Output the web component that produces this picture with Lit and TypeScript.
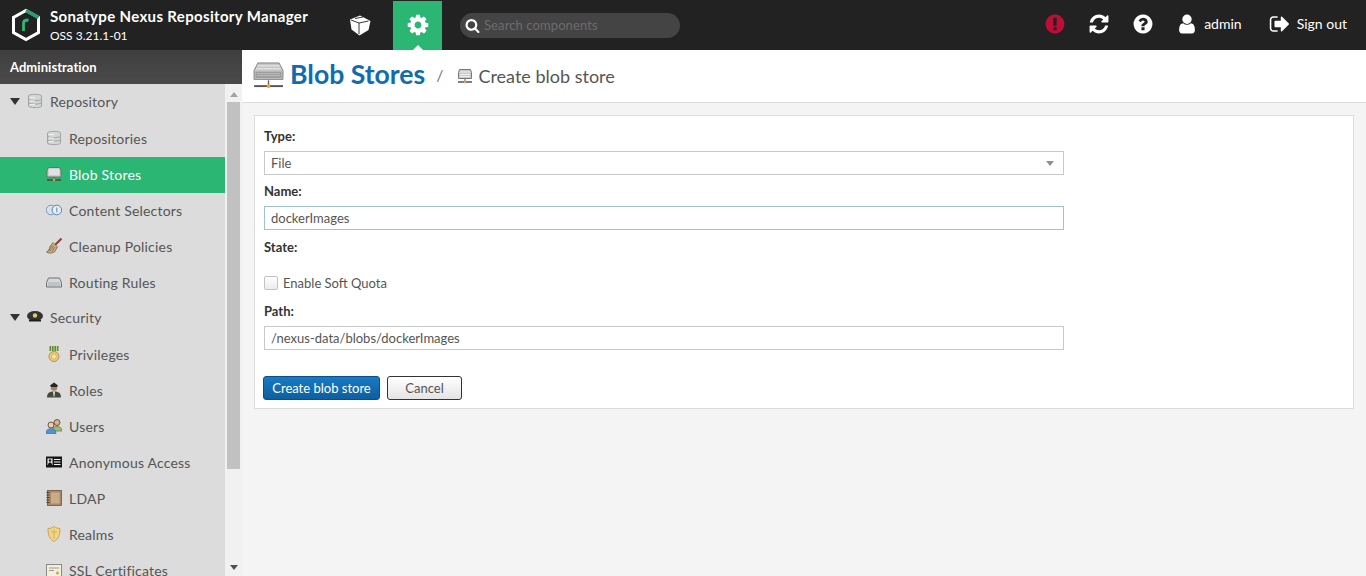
import { LitElement, html, css, svg } from "lit";
import { customElement } from "lit/decorators.js";

const fa = (d: string, cls = "fa") => html`<svg class=${cls} viewBox="0 0 1792 1792"><path d=${d} fill="currentColor"></path></svg>`;
const P = {
  cog: "M1152 896q0-106-75-181t-181-75-181 75-75 181 75 181 181 75 181-75 75-181zm512-109v222q0 12-8 23t-20 13l-185 28q-19 54-39 91 35 50 107 138 10 12 10 25t-9 23q-27 37-99 108t-94 71q-12 0-26-9l-138-108q-44 23-91 38-16 136-29 186-7 28-36 28h-222q-14 0-24.5-8.5t-11.5-21.5l-28-184q-49-16-90-37l-141 107q-10 9-25 9-14 0-25-11-126-114-165-168-7-10-7-23 0-12 8-23 15-21 51-66.5t54-70.5q-27-50-41-99l-183-27q-13-2-21-12.5t-8-23.5v-222q0-12 8-23t19-13l186-28q14-46 39-92-40-57-107-138-10-12-10-24 0-10 9-23 26-36 98.5-107.5t94.5-71.5q13 0 26 10l138 107q44-23 91-38 16-136 29-186 7-28 36-28h222q14 0 24.5 8.5t11.5 21.5l28 184q49 16 90 37l142-107q9-9 24-9 13 0 25 10 129 119 165 170 7 8 7 22 0 12-8 23-15 21-51 66.5t-54 70.5q26 50 41 98l183 28q13 2 21 12.5t8 23.5z",
  search: "M1216 832q0-185-131.5-316.5t-316.5-131.5-316.5 131.5-131.5 316.5 131.5 316.5 316.5 131.5 316.5-131.5 131.5-316.5zm512 832q0 52-38 90t-90 38q-54 0-90-38l-343-342q-179 124-399 124-143 0-273.5-55.5t-225-150-150-225-55.5-273.5 55.5-273.5 150-225 225-150 273.5-55.5 273.5 55.5 225 150 150 225 55.5 273.5q0 220-124 399l343 343q37 37 37 90z",
  refresh: "M1639 1056q0 5-1 7-64 268-268 434.5t-478 166.5q-146 0-282.5-55t-243.5-157l-129 129q-19 19-45 19t-45-19-19-45v-448q0-26 19-45t45-19h448q26 0 45 19t19 45-19 45l-137 137q71 66 161 102t187 36q134 0 250-65t186-179q11-17 53-117 8-23 30-23h192q13 0 22.5 9.5t9.5 22.5zm25-800v448q0 26-19 45t-45 19h-448q-26 0-45-19t-19-45 19-45l138-138q-148-137-349-137-134 0-250 65t-186 179q-11 17-53 117-8 23-30 23h-199q-13 0-22.5-9.5t-9.5-22.5v-7q65-268 270-434.5t480-166.5q146 0 284 55.5t245 156.5l130-129q19-19 45-19t45 19 19 45z",
  question: "M1024 1376v-192q0-14-9-23t-23-9h-192q-14 0-23 9t-9 23v192q0 14 9 23t23 9h192q14 0 23-9t9-23zm256-672q0-88-55.5-163t-138.5-116-170-41q-243 0-371 213-15 24 8 42l132 100q7 6 19 6 16 0 25-12 53-68 86-92 34-24 86-24 48 0 85.5 26t37.5 59q0 38-20 61t-68 45q-63 28-115.5 86.5t-52.5 125.5v36q0 14 9 23t23 9h192q14 0 23-9t9-23q0-19 21.5-49.5t54.5-49.5q32-18 49-28.5t46-35 44.5-48 28-60.5 12.5-81zm384 192q0 209-103 385.5t-279.5 279.5-385.5 103-385.5-103-279.5-279.5-103-385.5 103-385.5 279.5-279.5 385.5-103 385.5 103 279.5 279.5 103 385.5z",
  excl: "M896 128q209 0 385.5 103t279.5 279.5 103 385.5-103 385.5-279.5 279.5-385.5 103-385.5-103-279.5-279.5-103-385.5 103-385.5 279.5-279.5 385.5-103zm128 1247v-190q0-14-9-23.5t-22-9.5h-192q-13 0-23 10t-10 23v190q0 13 10 23t23 10h192q13 0 22-9.5t9-23.5zm-2-344l18-621q0-12-10-18-10-8-24-8h-220q-14 0-24 8-10 6-10 18l17 621q0 10 10 17.5t24 7.5h185q14 0 23.5-7.5t11.5-17.5z",
  user: "M1536 1399q0 109-62.5 187t-150.5 78h-854q-88 0-150.5-78t-62.5-187q0-85 8.5-160.5t31.5-152 58.5-131 94-89 134.5-34.5q131 128 313 128t313-128q76 0 134.5 34.5t94 89 58.5 131 31.5 152 8.5 160.5zm-256-887q0 159-112.5 271.5t-271.5 112.5-271.5-112.5-112.5-271.5 112.5-271.5 271.5-112.5 271.5 112.5 112.5 271.5z",
  signout: "M704 1440q0 4 1 20t.5 26.5-3 23.5-10 19.5-20.5 6.5h-320q-119 0-203.5-84.5t-84.5-203.5v-704q0-119 84.5-203.5t203.5-84.5h320q13 0 22.5 9.5t9.5 22.5q0 4 1 20t.5 26.5-3 23.5-10 19.5-20.5 6.5h-320q-66 0-113 47t-47 113v704q0 66 47 113t113 47h312l11.5 1 11.5 3 8 5.5 7 9 2 13.5zm928-544q0 26-19 45l-544 544q-19 19-45 19t-45-19-19-45v-288h-448q-26 0-45-19t-19-45v-384q0-26 19-45t45-19h448v-288q0-26 19-45t45-19 45 19l544 544q19 19 19 45z",
};

const ic = (body: unknown) => html`<svg class="ti" viewBox="0 0 16 16">${body}</svg>`;
const db = ic(svg`<path d="M1.500 3c0-2.200 13-2.200 13 0v10c0 2.200-13 2.200-13 0z" fill="#d4d6d6" stroke="#a2a5a5"/><path d="M1.500 6.500c2.500 1.500 10.500 1.500 13 0M1.500 10c2.500 1.500 10.500 1.500 13 0" fill="none" stroke="#a2a5a5"/><path d="M3 4.500h5M3 8h5M3 11.500h5" stroke="#f0f0f0"/>`);
const blob = ic(svg`<path d="M2.500 1.500h11l1.500 3v6.500H1V4.500z" fill="#cfcfcf" stroke="#6f6f6f"/><path d="M3 4h10M3 6h10M3 8h10" stroke="#f4f4f4"/><path d="M8 11v2" stroke="#555"/><path d="M1 14h14" stroke="#444" stroke-width="1.500"/><circle cx="8" cy="13.800" r="1.300" fill="#e8a62c"/>`);
const selectors = ic(svg`<circle cx="5" cy="8" r="4.800" fill="#d7e2ee" stroke="#7a97b8"/><circle cx="10.800" cy="8" r="4.800" fill="#e6edf4" stroke="#5f83ab"/><path d="M10.800 5.500v5" stroke="#5f83ab"/>`);
const broom = ic(svg`<path d="M15.500.5 9 7" stroke="#8a3f35" stroke-width="2"/><path d="M7 4.500l4.500 4.500-3 5c-3 1.500-6 1.500-8 0 2-1 3-3 3.500-5.500z" fill="#c8ad82" stroke="#6f5a3a" stroke-width=".7"/><path d="M4 13l3.500-5M2 13.500 6 7.500M6 13.500 9 9" stroke="#6f5a3a" stroke-width=".6"/>`);
const routing = ic(svg`<path d="M2.500 4h11l2 4.500V13H.5V8.500z" fill="#d6d8d9" stroke="#6d7274"/><path d="M2.500 9h11M2.500 11h11" stroke="#7f8486" stroke-dasharray="1 1"/>`);
const cap = ic(svg`<ellipse cx="8" cy="7" rx="8" ry="5" fill="#333"/><path d="M2 10.500h12v2H2z" fill="#1e1e1e"/><circle cx="8" cy="6.500" r="2.200" fill="#e6c66a"/>`);
const medal = ic(svg`<rect x="3.500" y="0" width="9" height="5" fill="#5f8a3c"/><path d="M5.500 0v5M8 0v5M10.500 0v5" stroke="#d8e2b6" stroke-width=".8"/><circle cx="8" cy="10.500" r="5" fill="#ecc877" stroke="#b9934a"/><circle cx="8" cy="10.500" r="2.500" fill="#f6e3ae" stroke="#c4a35d" stroke-width=".6"/>`);
const role = ic(svg`<path d="M1 15.500c0-4.500 2.500-6 7-6s7 1.500 7 6z" fill="#45483f"/><circle cx="8" cy="5.500" r="3.200" fill="#a9805c"/><path d="M4 3.500 8 .5l4 3-1 1.500H5z" fill="#262626"/><path d="M7 9.500h2l-.5 5h-1z" fill="#ddd"/>`);
const users = ic(svg`<circle cx="11" cy="4.500" r="3" fill="#d8b190" stroke="#4c3a28" stroke-width=".8"/><path d="M6 13c0-3 2-4.500 5-4.500s5 1.500 5 4.500z" fill="#a2bb73" stroke="#5e7440" stroke-width=".7"/><circle cx="5" cy="7" r="3" fill="#eccfb0" stroke="#4c3a28" stroke-width=".8"/><path d="M0 15.500c0-3.500 2-4.800 5-4.800s5 1.300 5 4.800z" fill="#4f93d6" stroke="#3d6ea0" stroke-width=".7"/>`);
const card = ic(svg`<rect x="0" y="2.500" width="16" height="11" fill="#161616"/><rect x="1.500" y="4.500" width="5" height="6.500" fill="#f2f2f2"/><circle cx="4" cy="6.500" r="1.300" fill="#161616"/><path d="M2 11c0-2 1-2.500 2-2.500s2 .5 2 2.500z" fill="#161616"/><path d="M8 5.500h6.500M8 8h6.500M8 10.500h6.500" stroke="#f2f2f2"/>`);
const book = ic(svg`<rect x="1.500" y="0.500" width="14" height="15" fill="#a98a68" stroke="#6f5639" stroke-width=".8"/><rect x="5" y="2.500" width="8.500" height="11" fill="#c8ad88"/><path d="M0.500 2.500h3M0.500 5h3M0.500 7.500h3M0.500 10h3M0.500 12.500h3" stroke="#4a3a28"/>`);
const shield = ic(svg`<path d="M8 .5c2 1.500 4 2 6 2 0 6.500-1.500 10.500-6 13C3.500 13 2 9 2 2.500c2 0 4-.5 6-2z" fill="#f1d487" stroke="#c9a650"/><path d="M8 3v10M5 6h6" stroke="#c9a650" stroke-width=".7"/>`);
const cert = ic(svg`<rect x=".5" y="2.500" width="15" height="12" fill="#f3efdf" stroke="#8b8b7f"/><path d="M3 6h10M3 8.500h5" stroke="#9a9a90"/><circle cx="11.500" cy="11" r="1.500" fill="#c9a650"/>`);

const bigBlob = html`<svg class="big" viewBox="0 0 32 28"><path d="M5 1h22l4 8v9H1V9z" fill="#c6c6c6" stroke="#7f7f7f"/><path d="M4 4h24M3 7h26" stroke="#eaeaea"/><rect x="2.500" y="10" width="27" height="6.500" fill="#9d9d9d"/><path d="M4 12h24M4 14h24" stroke="#bcbcbc"/><path d="M16 19v5" stroke="#666" stroke-width="1.500"/><path d="M1 25h30" stroke="#555" stroke-width="2"/><circle cx="16" cy="25" r="2" fill="#eda72c"/></svg>`;
const smallBlob = html`<svg class="crumb" viewBox="0 0 16 16"><path d="M2.500 1.500h11l1 3v6h-13v-6z" fill="#c9c9c9" stroke="#777"/><path d="M3 4h10M3 6.500h10M3 8.500h10" stroke="#f1f1f1"/><path d="M8 11v2" stroke="#555"/><path d="M1 14h14" stroke="#555" stroke-width="1.500"/><circle cx="8" cy="14" r="1.200" fill="#e8a62c"/></svg>`;

const rows: [string, unknown, boolean?, boolean?][] = [
  ["Repository", db, true],
  ["Repositories", db],
  ["Blob Stores", blob, false, true],
  ["Content Selectors", selectors],
  ["Cleanup Policies", broom],
  ["Routing Rules", routing],
  ["Security", cap, true],
  ["Privileges", medal],
  ["Roles", role],
  ["Users", users],
  ["Anonymous Access", card],
  ["LDAP", book],
  ["Realms", shield],
  ["SSL Certificates", cert],
];

@customElement("app-root")
export class AppRoot extends LitElement {
  static styles = css`
    :host { display: flex; flex-direction: column; height: 100vh; overflow: hidden; font-family: Lato, "Open Sans", sans-serif; font-size: 14px; color: #3a3a3a; background: #f4f4f4; }
    .top { flex: none; height: 50px; background: #222; color: #fff; display: flex; align-items: center; }
    .logo { width: 30px; height: 34px; margin-left: 11px; flex: none; }
    .brand { margin-left: 9px; width: 298px; flex: none; display: flex; flex-direction: column; gap: 4px; }
    .brand b { font-size: 15px; line-height: 18px; font-weight: 700; white-space: nowrap; letter-spacing: .34px; }
    .brand span { font-size: 12px; line-height: 14px; font-weight: 400; white-space: nowrap; }
    .fa { display: block; flex: none; width: 24px; height: 24px; }
    .cube { margin-right: 21px; width: 24px; height: 24px; display: flex; align-items: center; justify-content: center; flex: none; }
    .cube svg { width: 22px; height: 21px; }
    .admin-tab { position: relative; flex: none; width: 49px; height: 49px; margin-top: 1px; background: #2cb673; display: flex; align-items: center; justify-content: center; }
    .admin-tab .fa { margin-top: -2px; }
    .admin-tab::after { content: ""; position: absolute; left: 50%; bottom: 0; margin-left: -5px; border: 5px solid transparent; border-top: 0; border-bottom-color: #fff; }
    .search { margin-left: 18px; width: 220px; height: 25px; border-radius: 13px; background: #444; display: flex; align-items: center; gap: 4px; padding-left: 5px; box-sizing: border-box; color: #6c6c6c; font-size: 13px; letter-spacing: .1px; }
    .search .fa { width: 15px; height: 15px; color: #fff; }
    .right { margin-left: auto; display: flex; align-items: center; padding: 0 19px 2px 0; font-size: 14px; }
    .right .fa { width: 22px; height: 22px; }
    .lbl { margin-bottom: 2px; }
    .err { color: #bc0f35; margin-right: 22px; }
    .ref { margin-right: 22px; }
    .help { margin-right: 22px; }
    .usr { margin-right: 6px; }
    .name { margin-right: 27px; }
    .so { margin-right: 6px; }
    .body { flex: 1; min-height: 0; display: flex; }
    .side { flex: none; width: 242px; display: flex; flex-direction: column; min-height: 0; }
    .side h2 { flex: none; margin: 0; height: 34px; background: linear-gradient(#3f3f3f, #4a4a4a); color: #fff; font-size: 13px; font-weight: 700; line-height: 35px; padding-left: 10px; letter-spacing: .05px; }
    .sbody { flex: 1; min-height: 0; display: flex; overflow: hidden; }
    .tree { width: 225px; flex: none; background: #dcdcdc; overflow: hidden; padding-top: 1px; }
    .row { height: 36px; box-sizing: border-box; display: flex; align-items: center; color: #555; white-space: nowrap; font-size: 14px; letter-spacing: .2px; padding: 0 0 2px 46px; gap: 7px; }
    .row.t { padding: 0 0 4px 10px; }
    .row.sel { background: #2cb673; color: #fff; }
    .tw { width: 0; height: 0; border: 5px solid transparent; border-bottom: 0; border-top: 7px solid #333; margin-right: 0; }
    .ti { width: 16px; height: 16px; flex: none; }
    .sb { flex: 1; background: #f1f1f1; display: flex; flex-direction: column; align-items: center; padding: 0 2px; }
    .arr { flex: none; width: 0; height: 0; border: 4px solid transparent; }
    .arr.up { border-top: 0; border-bottom: 5px solid #a3a3a3; margin: 8px 0 5px; }
    .arr.dn { border-bottom: 0; border-top: 5px solid #505050; margin: 0 0 6px; }
    .thumb { flex: none; height: 367px; width: 13px; background: #c1c1c1; margin-bottom: auto; }
    .main { flex: 1; min-width: 0; display: flex; flex-direction: column; }
    .head { flex: none; height: 53px; box-sizing: border-box; background: #fff; border-bottom: 1px solid #dcdcdc; display: flex; align-items: center; padding-left: 11px; }
    .big { width: 31px; height: 27px; flex: none; margin-top: -2px; }
    .head h1 { margin: -4px 0 0 6px; color: #0f6cae; font-size: 26.600px; font-weight: 700; white-space: nowrap; }
    .slash { margin-left: 11px; color: #777; font-size: 16px; margin-top: -4px; }
    .crumb { width: 16px; height: 16px; margin-left: 14px; flex: none; }
    .ctitle { margin-left: 5px; font-size: 18px; color: #555; }
    .panel { margin: 12px 12px 0 12px; box-sizing: border-box; height: 294px; background: #fff; border: 1px solid #dcdcdc; padding: 12px 9px 0 9px; display: flex; flex-direction: column; }
    label { font-size: 13px; font-weight: 700; color: #333; line-height: 16px; display: block; }
    .fld { box-sizing: border-box; width: 800px; height: 24px; border: 1px solid #c8c8c8; background: #fff; display: flex; align-items: center; padding: 0 6px; font-size: 13px; color: #555; margin-top: 7px; }
    .fld.sel { justify-content: space-between; margin-bottom: 8px; }
    .fld.foc { border-color: #a0c4cf; margin-bottom: 9px; }
    .caret { width: 0; height: 0; border: 4px solid transparent; border-bottom: 0; border-top: 5px solid #8f8f8f; margin-right: 3px; }
    .chk { display: flex; align-items: center; gap: 5px; margin-top: 19px; height: 18px; font-size: 13px; color: #555; }
    .box { width: 12px; height: 12px; border: 1px solid #c2c2c2; border-radius: 2px; background: linear-gradient(#fff, #ececec); flex: none; }
    .mt { margin-top: 11px; }
    .btns { display: flex; gap: 7px; margin-top: 26px; margin-left: -1px; }
    button { font: inherit; font-size: 13px; height: 24px; padding: 0; border-radius: 3px; box-sizing: border-box; }
    .pri { width: 117px; background: linear-gradient(#197ac5, #0d5f9f); border: 1px solid #0b4f86; color: #fff; }
    .sec { width: 75px; background: linear-gradient(#fff, #e4e4e4); border: 1px solid #333; color: #555; }
  `;
  render() {
    return html`
      <div class="top">
        <svg class="logo" viewBox="0 0 30 34">
          <path d="M15 2.500 27.500 9.500v15L15 31.500 2.500 24.500v-15z" fill="none" stroke="#fff" stroke-width="3"></path>
          <path d="M15 2.500 27.500 9.500" stroke="#2a9d6b" stroke-width="3.200" fill="none"></path>
          <path d="M12.500 23v-8c0-2 1-3 5-3" stroke="#2cb673" stroke-width="2.800" fill="none"></path>
        </svg>
        <div class="brand"><b>Sonatype Nexus Repository Manager</b><span>OSS 3.21.1-01</span></div>
        <div class="cube">
          <svg viewBox="0 0 22 21">
            <path d="M1 4.500 11 .5l10.500 5.500-2 9L10.500 20.500 2.500 14.500z" fill="#fff"></path>
            <path d="M2 5 10 8l9.500-2M10 8v11M6 3.500l8-1.500" stroke="#222" stroke-width=".9" fill="none"></path>
          </svg>
        </div>
        <div class="admin-tab">${fa(P.cog)}</div>
        <div class="search">${fa(P.search)}<span>Search components</span></div>
        <div class="right">
          <span class="err">${fa(P.excl)}</span>
          <span class="ref">${fa(P.refresh)}</span>
          <span class="help">${fa(P.question)}</span>
          <span class="usr">${fa(P.user)}</span>
          <span class="name lbl">admin</span>
          <span class="so">${fa(P.signout)}</span>
          <span class="lbl">Sign out</span>
        </div>
      </div>
      <div class="body">
        <div class="side">
          <h2>Administration</h2>
          <div class="sbody">
            <div class="tree">
              ${rows.map(([t, i, top, sel]) => html`<div class="row ${top ? "t" : ""} ${sel ? "sel" : ""}">${top ? html`<span class="tw"></span>` : ""}${i}<span>${t}</span></div>`)}
            </div>
            <div class="sb"><span class="arr up"></span><span class="thumb"></span><span class="arr dn"></span></div>
          </div>
        </div>
        <div class="main">
          <div class="head">${bigBlob}<h1>Blob Stores</h1><span class="slash">/</span>${smallBlob}<span class="ctitle">Create blob store</span></div>
          <div class="panel">
            <label>Type:</label>
            <div class="fld sel"><span>File</span><span class="caret"></span></div>
            <label>Name:</label>
            <div class="fld foc">dockerImages</div>
            <label>State:</label>
            <div class="chk"><span class="box"></span><span>Enable Soft Quota</span></div>
            <label class="mt">Path:</label>
            <div class="fld">/nexus-data/blobs/dockerImages</div>
            <div class="btns"><button class="pri">Create blob store</button><button class="sec">Cancel</button></div>
          </div>
        </div>
      </div>
    `;
  }
}
